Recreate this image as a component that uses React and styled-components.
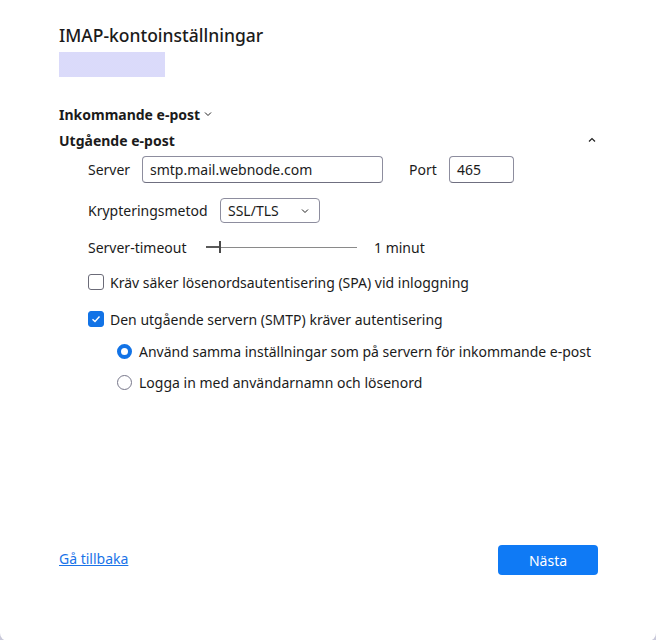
import React from "react";
import styled, { createGlobalStyle } from "styled-components";

const Global = createGlobalStyle`
  html, body { margin: 0; padding: 0; background: #c9c9da; }
  body { font-family: "Noto Sans", "Open Sans", sans-serif; color: #1b1b1b; }
  * { box-sizing: border-box; }
`;

const Dialog = styled.div`
  width: 656px;
  height: 641px;
  background: #fff;
  border-radius: 0 0 8px 8px;
  padding: 21px 58px 0 59px;
  display: flex;
  flex-direction: column;
  overflow: hidden;
`;

const Title = styled.h1`
  margin: 0;
  font-size: 17.5px;
  font-weight: 500;
  line-height: 28px;
`;

const Account = styled.div`
  margin-top: 3px;
  width: 106px;
  height: 25px;
  background-color: #f4f4ff;
  background-image: radial-gradient(#d9d9fa 0.7px, transparent 0.8px);
  background-size: 2px 2px;
`;

const SectionHead = styled.div`
  display: flex;
  align-items: center;
  justify-content: ${(p) => (p.$spread ? "space-between" : "flex-start")};
  gap: 4px;
  height: 26px;
  font-size: 14px;
  font-weight: 700;
  margin-top: ${(p) => p.$top || 0}px;
`;

const Chevron = styled.svg`
  width: 8px;
  height: 8px;
  margin-right: ${(p) => p.$mr || 0}px;
`;

const Body = styled.div`
  padding-left: 29px;
  display: flex;
  flex-direction: column;
`;

const Row = styled.div`
  display: flex;
  align-items: center;
  height: ${(p) => p.$h}px;
  margin-top: ${(p) => p.$mt || 0}px;
  font-size: 14px;
`;

const Label = styled.span`
  width: ${(p) => (p.$w ? `${p.$w}px` : "auto")};
  margin-left: ${(p) => p.$ml || 0}px;
  flex: none;
`;

const TextInput = styled.div`
  width: ${(p) => p.$w}px;
  height: 27px;
  border: 1px solid #8d8d9e;
  border-bottom-color: #6f6f80;
  border-radius: 4px;
  padding: 0 7px;
  display: flex;
  align-items: center;
  font-size: 14px;
`;

const Select = styled.div`
  width: 100px;
  height: 25px;
  border: 1px solid #8d8d9e;
  border-radius: 4px;
  padding: 0 10px 0 7px;
  display: flex;
  align-items: center;
  justify-content: space-between;
  font-size: 14px;
`;

const Slider = styled.div`
  position: relative;
  width: 151px;
  height: 12px;
`;

const Track = styled.div`
  position: absolute;
  left: 0;
  right: 0;
  top: 6px;
  height: 1px;
  background: #8a8a8a;
`;

const Filled = styled.div`
  position: absolute;
  left: 0;
  width: 14px;
  top: 5px;
  height: 2px;
  background: #5a5a5a;
`;

const Thumb = styled.div`
  position: absolute;
  left: 13px;
  top: 0;
  width: 2px;
  height: 12px;
  background: #4a4a4a;
`;

const Check = styled.span`
  width: 16px;
  height: 16px;
  border-radius: 3px;
  flex: none;
  border: 1px solid ${(p) => (p.$on ? "#1273e6" : "#6b6b78")};
  background: ${(p) => (p.$on ? "#1273e6" : "#fff")};
  display: flex;
  align-items: center;
  justify-content: center;
  margin-right: 6px;
`;

const Radio = styled.span`
  width: 15px;
  height: 15px;
  border-radius: 50%;
  flex: none;
  border: ${(p) => (p.$on ? "4px solid #1273e6" : "1px solid #77778a")};
  background: #fff;
  margin-right: 7px;
`;

const Indent = styled.div`
  padding-left: 29px;
  display: flex;
  flex-direction: column;
`;

const Spacer = styled.div`
  flex: 1;
`;

const Footer = styled.div`
  display: flex;
  align-items: center;
  justify-content: space-between;
  height: 30px;
  margin-bottom: 66px;
`;

const Link = styled.a`
  color: #1a73e8;
  text-decoration: underline;
  font-size: 14px;
  cursor: pointer;
  margin-top: -3px;
`;

const Primary = styled.button`
  width: 100px;
  height: 30px;
  border: none;
  border-radius: 4px;
  background: #0f7af5;
  color: #fff;
  font-family: inherit;
  font-size: 14px;
`;

const ChevronDown = (props) => (
  <Chevron viewBox="0 0 8 8" {...props}>
    <path d="M1 2.5 L4 5.5 L7 2.5" fill="none" stroke="#222" strokeWidth="1" />
  </Chevron>
);

const ChevronUp = (props) => (
  <Chevron viewBox="0 0 8 8" {...props}>
    <path d="M1 5.5 L4 2.5 L7 5.5" fill="none" stroke="#222" strokeWidth="1.2" />
  </Chevron>
);

export default function App() {
  return (
    <>
      <Global />
      <Dialog>
        <Title>IMAP-kontoinställningar</Title>
        <Account />
        <SectionHead $top={24}>
          Inkommande e-post
          <ChevronDown />
        </SectionHead>
        <SectionHead $spread>
          Utgående e-post
          <ChevronUp $mr={2} />
        </SectionHead>
        <Body>
          <Row $h={27} $mt={3}>
            <Label $w={54}>Server</Label>
            <TextInput $w={241}>smtp.mail.webnode.com</TextInput>
            <Label $w={40} $ml={26}>Port</Label>
            <TextInput $w={65}>465</TextInput>
          </Row>
          <Row $h={25} $mt={15}>
            <Label $w={132}>Krypteringsmetod</Label>
            <Select>
              SSL/TLS
              <ChevronDown />
            </Select>
          </Row>
          <Row $h={22} $mt={13}>
            <Label $w={118}>Server-timeout</Label>
            <Slider>
              <Track />
              <Filled />
              <Thumb />
            </Slider>
            <Label $ml={17}>1 minut</Label>
          </Row>
          <Row $h={22} $mt={13}>
            <Check />
            Kräv säker lösenordsautentisering (SPA) vid inloggning
          </Row>
          <Row $h={22} $mt={15}>
            <Check $on>
              <svg width="10" height="10" viewBox="0 0 10 10">
                <path d="M1.5 5.2 L4 7.5 L8.5 2.5" fill="none" stroke="#fff" strokeWidth="1.4" />
              </svg>
            </Check>
            Den utgående servern (SMTP) kräver autentisering
          </Row>
          <Indent>
            <Row $h={22} $mt={10}>
              <Radio $on />
              Använd samma inställningar som på servern för inkommande e-post
            </Row>
            <Row $h={22} $mt={9}>
              <Radio />
              Logga in med användarnamn och lösenord
            </Row>
          </Indent>
        </Body>
        <Spacer />
        <Footer>
          <Link>Gå tillbaka</Link>
          <Primary>Nästa</Primary>
        </Footer>
      </Dialog>
    </>
  );
}
